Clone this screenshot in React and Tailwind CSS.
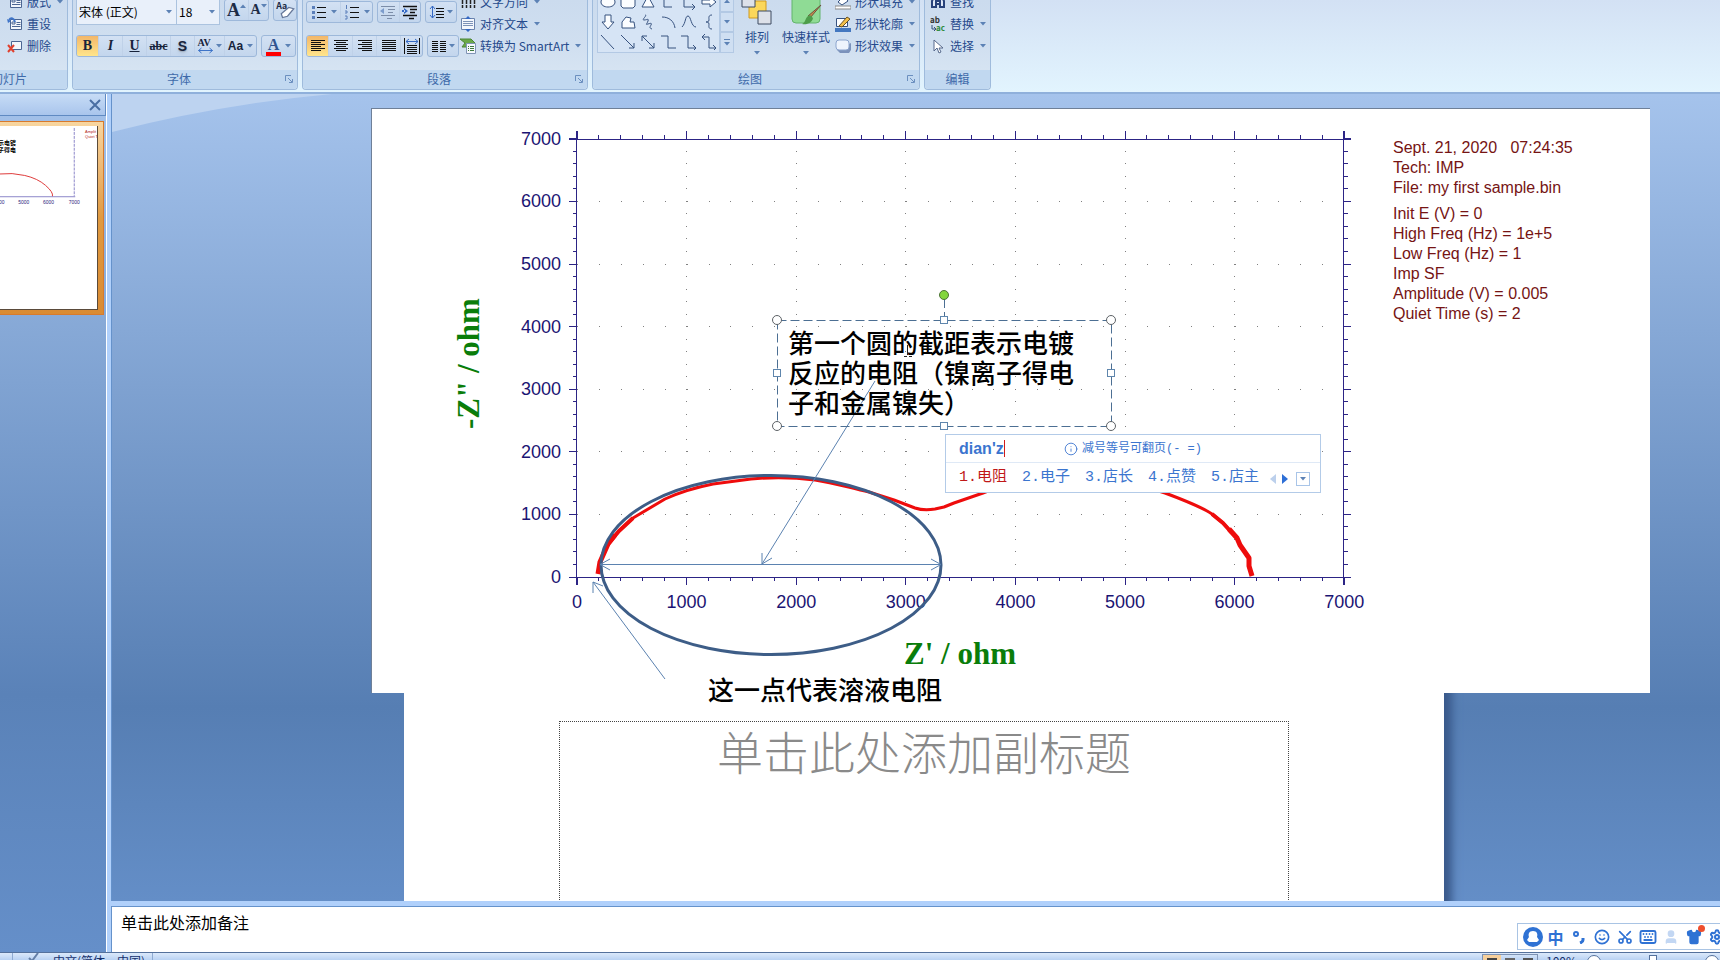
import { useState } from 'react';
import clsx from 'clsx';
import { Info, Keyboard, Scissors, Settings, Shirt, Smile, User } from 'lucide-react';

const X0 = 577;
const Y0 = 576;
const STEP_X = 109.6;
const STEP_Y = 62.6;
const MAJORS = [0, 1, 2, 3, 4, 5, 6, 7];
const MINORS = Array.from({ length: 36 }, (_, i) => i);

const candidates = ['电阻', '电子', '店长', '点赞', '店主'];

const runInfo = ['Sept. 21, 2020   07:24:35', 'Tech: IMP', 'File: my first sample.bin'];

const runParams = [
  'Init E (V) = 0',
  'High Freq (Hz) = 1e+5',
  'Low Freq (Hz) = 1',
  'Imp SF',
  'Amplitude (V) = 0.005',
  'Quiet Time (s) = 2'
];

const box = 'flex h-[22px] rounded-[3px] border border-[#9db8da] bg-linear-to-b from-[#d3e1f3] to-[#c3d6ed]';
const tool = 'flex h-full items-center justify-center gap-1 border-r border-[#bfd1e8] last:border-r-0';
const imeCell = 'flex w-[23px] shrink-0 justify-center';

function Caret({ className }) {
  return (
    <svg viewBox="0 0 6 4" className={clsx('h-1 w-1.5 shrink-0', className)} aria-hidden="true">
      <path d="M0 0h6L3 3.5z" fill="#5c82b5" />
    </svg>
  );
}

function Icon({ children, className = 'h-4 w-4' }) {
  return (
    <svg viewBox="0 0 16 16" className={clsx('shrink-0', className)} fill="none" aria-hidden="true">
      {children}
    </svg>
  );
}

function Group({ label, className, launcher, children }) {
  return (
    <section className={clsx('flex shrink-0 flex-col rounded-b border-x border-b border-[#9fbbdc] bg-linear-to-b from-[#cbdbee] via-[#d0dff0] to-[#dae7f4]', className)}>
      <div className="flex h-[70px] items-end pb-[13px] pl-[3px]">{children}</div>
      <div className="flex h-[19px] items-center rounded-b bg-[#c1d8f0] pb-0.5">
        <h2 className="flex-1 text-center text-xs text-[#3e6aaa]">{label}</h2>
        {launcher && (
          <button type="button" aria-label={label + '设置'} className="mr-1">
            <svg viewBox="0 0 8 8" className="h-2 w-2" fill="none" stroke="#6b8fbf">
              <path d="M.5 6V.5H6M3 3l4 4M7.5 4v3.5H4" />
            </svg>
          </button>
        )}
      </div>
    </section>
  );
}

function Item({ icon, label, caret }) {
  return (
    <button type="button" className="flex h-[22px] items-center gap-0.5 text-xs whitespace-nowrap text-[#264a8c]">
      {icon}
      <span className="px-0.5">{label}</span>
      {caret && <Caret className="ml-0.5" />}
    </button>
  );
}

function Select({ label, value, className }) {
  return (
    <label className={clsx('relative flex h-[26px] items-center border border-[#abc3df] bg-[#e9f0fa]', className)}>
      <select aria-label={label} defaultValue={value} className="w-full appearance-none pl-0.5 text-xs text-black outline-none">
        <option>{value}</option>
      </select>
      <Caret className="absolute right-1" />
    </label>
  );
}

function Lines({ rows }) {
  return (
    <Icon>
      {rows.map(([from, to], i) => (
        <path key={i} d={`M${from} ${2.5 + i * 2}H${to}`} stroke="#111" />
      ))}
    </Icon>
  );
}

const slideIcon = <path d="M3.5 3.5h11v10h-11zM5 6h3v2H5zM9.500 6.500h4M9.500 8.500h4M5 10.500h8.500" stroke="#4c6693" fill="#f3f7fd" />;

function SlidesGroup() {
  return (
    <Group label="幻灯片" className="-ml-[50px] w-[118px]">
      <div className="ml-[53px] flex flex-col items-start">
        <Item label="版式" caret icon={<Icon>{slideIcon}</Icon>} />
        <Item
          label="重设"
          icon={
            <Icon>
              {slideIcon}
              <path d="M8 6C7 2 4 1 2 4" stroke="#3e74c8" strokeWidth="2" />
              <path d="M0 3l1 4 3-2z" fill="#3e74c8" />
            </Icon>
          }
        />
        <Item
          label="删除"
          icon={
            <Icon>
              <path d="M4.500 3.500h10v8h-10z" fill="#f3f7fd" stroke="#4c6693" />
              <path d="M1 7l6 7M7 7l-6 7" stroke="#e0402e" strokeWidth="2" />
            </Icon>
          }
        />
      </div>
    </Group>
  );
}

function FontGroup() {
  const [bold, setBold] = useState(true);
  return (
    <Group label="字体" launcher className="w-[226px]">
      <div className="flex flex-col gap-2.5">
        <div className="flex">
          <Select label="字体" value="宋体 (正文)" className="w-[101px]" />
          <Select label="字号" value="18" className="w-[43px] border-l-0" />
          <div className={clsx(box, 'ml-1 w-[45px] font-["Liberation_Serif",serif] font-bold text-[#1d2b45]')}>
            <button type="button" aria-label="增大字号" className={clsx(tool, 'w-6 text-lg leading-none')}>
              A
              <Caret className="-ml-1 mb-2 rotate-180" />
            </button>
            <button type="button" aria-label="减小字号" className={clsx(tool, 'flex-1 text-sm leading-none')}>
              A
              <Caret className="-ml-1 mb-2" />
            </button>
          </div>
          <button type="button" aria-label="清除格式" className={clsx(box, 'ml-1 w-6 items-center justify-center')}>
            <Icon className="h-5 w-5">
              <text x="1" y="7" fontSize="7" fontWeight="700" fill="#1d2b45">Aa</text>
              <path d="M5 11l6-5 4 1-5 6-4 1z" fill="#fff" stroke="#66789a" />
            </Icon>
          </button>
        </div>
        <div className="flex gap-1">
          <div className={clsx(box, 'w-[181px] overflow-hidden font-["Liberation_Serif",serif] text-sm text-[#17233b]')}>
            <button
              type="button"
              aria-label="加粗"
              onClick={() => setBold((prev) => !prev)}
              className={clsx(tool, 'w-[22px] font-bold', bold && 'bg-linear-to-b from-[#f3b76a] to-[#ffe58b]')}
            >
              B
            </button>
            <button type="button" aria-label="倾斜" className={clsx(tool, 'w-6 font-bold italic')}>I</button>
            <button type="button" aria-label="下划线" className={clsx(tool, 'w-6 font-bold underline')}>U</button>
            <button type="button" aria-label="删除线" className={clsx(tool, 'w-6 text-xs font-bold line-through')}>abc</button>
            <button type="button" aria-label="阴影" className={clsx(tool, 'w-6 font-["Liberation_Sans",sans-serif] font-bold text-shadow-md')}>S</button>
            <button type="button" aria-label="字符间距" className={clsx(tool, 'w-[30px] text-xs')}>
              <Icon className="h-4 w-[17px]">
                <text x="0" y="8" fontSize="10" fontWeight="700" fill="#17233b">AV</text>
                <path d="M1 12.500h14M4 10l-3 2.500L4 15M12 10l3 2.500-3 2.500" stroke="#3e74c8" />
              </Icon>
              <Caret className="-ml-0.5" />
            </button>
            <button type="button" aria-label="更改大小写" className={clsx(tool, 'flex-1 font-["Liberation_Sans",sans-serif] text-xs font-bold')}>
              Aa
              <Caret />
            </button>
          </div>
          <button type="button" aria-label="字体颜色" className={clsx(box, 'w-[35px] items-center justify-center gap-1')}>
            <span className="border-b-4 border-[#f00] px-0.5 font-['Liberation_Serif',serif] text-base leading-[15px] font-bold text-[#31548f]">A</span>
            <Caret />
          </button>
        </div>
      </div>
    </Group>
  );
}

function ParagraphGroup() {
  return (
    <Group label="段落" launcher className="w-[286px]">
      <div className="flex w-[154px] flex-col gap-3">
        <div className="flex gap-1">
          <div className={clsx(box, 'w-[67px]')}>
            <button type="button" aria-label="项目符号" className={clsx(tool, 'w-[34px]')}>
              <Icon>
                <path d="M6 3.500h9M6 8.500h9M6 13.500h9" stroke="#111" />
                <path d="M1 2h3v3H1zM1 7h3v3H1zM1 12h3v3H1z" fill="#5b7fba" />
              </Icon>
              <Caret />
            </button>
            <button type="button" aria-label="编号" className={clsx(tool, 'flex-1')}>
              <Icon>
                <path d="M6 3.500h9M6 8.500h9M6 13.500h9" stroke="#111" />
                <path d="M2.500 1v4M1 7h2v2H1M1 12h2v3H1" stroke="#5b7fba" />
              </Icon>
              <Caret />
            </button>
          </div>
          <div className={clsx(box, 'w-[44px]')}>
            <button type="button" aria-label="减少缩进" className={clsx(tool, 'flex-1')}>
              <Icon>
                <path d="M1 2.500h14M8 5.500h7M8 8.500h5M1 11.500h14M7 14.500h5" stroke="#7c8da8" />
                <path d="M0 7l4-3v6z" fill="#7c9ccc" />
              </Icon>
            </button>
            <button type="button" aria-label="增加缩进" className={clsx(tool, 'flex-1')}>
              <Icon>
                <path d="M1 2.500h14M8 5.500h7M8 8.500h5M1 11.500h14M7 14.500h5" stroke="#111" strokeWidth="1.500" />
                <path d="M6 7L2 4v6zM0 6h3v2H0z" fill="#3569c4" />
              </Icon>
            </button>
          </div>
          <button type="button" aria-label="行距" className={clsx(box, 'w-8 items-center justify-center gap-0.5')}>
            <Icon>
              <path d="M7 4.500h8M7 7.500h8M7 10.500h8M7 13.500h8" stroke="#111" />
              <path d="M3.500 2v12M1 5l2.500-3L6 5M1 11l2.500 3L6 11" stroke="#3569c4" />
            </Icon>
            <Caret />
          </button>
        </div>
        <div className="flex gap-1">
          <div className={clsx(box, 'w-[117px] overflow-hidden')}>
            <button type="button" aria-label="左对齐" className={clsx(tool, 'w-[22px] bg-linear-to-b from-[#f3b76a] to-[#ffe58b]')}>
              <Lines rows={[[1, 15], [1, 11], [1, 15], [1, 11], [1, 15], [1, 11]]} />
            </button>
            <button type="button" aria-label="居中" className={clsx(tool, 'w-6')}>
              <Lines rows={[[1, 15], [3, 13], [1, 15], [3, 13], [1, 15], [3, 13]]} />
            </button>
            <button type="button" aria-label="右对齐" className={clsx(tool, 'w-6')}>
              <Lines rows={[[1, 15], [5, 15], [1, 15], [5, 15], [1, 15], [5, 15]]} />
            </button>
            <button type="button" aria-label="两端对齐" className={clsx(tool, 'w-6')}>
              <Lines rows={[[1, 15], [1, 15], [1, 15], [1, 15], [1, 15], [1, 15]]} />
            </button>
            <button type="button" aria-label="分散对齐" className={clsx(tool, 'flex-1')}>
              <Icon>
                <path d="M.5 0v16M15.500 0v16M3 7.500h10M3 9.500h10M3 11.500h10M3 13.500h10M3 15.500h10" stroke="#111" />
                <path d="M2 3.500h12M5 1L2 3.500 5 6M11 1l3 2.500L11 6" stroke="#3569c4" />
              </Icon>
            </button>
          </div>
          <button type="button" aria-label="分栏" className={clsx(box, 'w-8 items-center justify-center gap-0.5')}>
            <Icon>
              <path d="M1 3.500h6M1 5.500h6M1 7.500h6M1 9.500h6M1 11.500h6M1 13.500h6M9 3.500h6M9 5.500h6M9 7.500h6M9 9.500h6M9 11.500h6M9 13.500h6" stroke="#111" />
            </Icon>
            <Caret />
          </button>
        </div>
      </div>
      <div className="flex flex-col items-start">
        <Item label="文字方向" caret icon={<Icon><path d="M2.500 1v13M6.500 1v13M10.500 1v13M14.500 1v13" stroke="#222" strokeDasharray="9 1" strokeWidth="1.500" /></Icon>} />
        <Item
          label="对齐文本"
          caret
          icon={
            <Icon>
              <path d="M1.500 2.500h13v11h-13z" fill="#f3f7fd" stroke="#6a83ad" />
              <path d="M3 5.500h10M3 7.500h10M3 9.500h10" stroke="#7d93b8" />
              <path d="M8 0l3 3H5zM8 16l3-3H5z" fill="#3569c4" />
            </Icon>
          }
        />
        <Item
          label="转换为 SmartArt"
          caret
          icon={
            <Icon>
              <path d="M0 1h11l4 4-4 4H2l3-4z" fill="#6aa84a" stroke="#4d8637" />
              <path d="M6.500 5.500h9v10h-9z" fill="#f7f9fd" stroke="#8094b5" />
              <path d="M8 8.500h1M10 8.500h4M8 10.500h1M10 10.500h4M8 12.500h1M10 12.500h4" stroke="#3c7a3c" />
            </Icon>
          }
        />
      </div>
    </Group>
  );
}

const shapes = [
  { d: 'M8 3c4 0 7 2 7 5s-3 5-7 5-7-2-7-5 3-5 7-5z', solid: true },
  { d: 'M3 2h10l2 2v8l-2 2H3l-2-2V4z', solid: true },
  { d: 'M8 2l6 11H2z', solid: true },
  { d: 'M3 1v12h8' },
  { d: 'M3 1v12h10M11 10l3 3-3 3' },
  { d: 'M1 6h8V3l6 5-6 5v-3H1z', solid: true },
  { d: 'M5 1h6v7h3l-6 7-6-7h3z', solid: true },
  { d: 'M2 14V8l4-5 5 1-1 4h4l1 6z', solid: true },
  { d: 'M5 1c3 0-4 5-1 5s5-2 4 1-3 4 0 3 4-1 3 1-2 3 1 4' },
  { d: 'M1 3c7 0 12 4 13 11' },
  { d: 'M1 13C5 9 4 2 7 2s3 11 8 11' },
  { d: 'M11 1c-4 0-3 3-3 5s-2 2-3 2c1 0 3 0 3 2s-1 5 3 5' },
  { d: 'M1 1l13 14' },
  { d: 'M1 1l13 13M14 9v5H9' },
  { d: 'M2 2l12 12M14 9v5H9M2 7V2h5' },
  { d: 'M0 2h7v12h8' },
  { d: 'M0 2h7v12h8M12 11l3 3-3 3' },
  { d: 'M1 3h7v11h7M12 11l3 3-3 3M4 0L1 3l3 3' }
];

function DrawingGroup() {
  return (
    <Group label="绘图" launcher className="w-[328px]">
      <div className="mb-1 ml-px flex w-[137px] shrink-0">
        <div className="grid flex-1 grid-cols-6 border border-[#b3c9e4] bg-[#d6e4f5]">
          {shapes.map((shape) => (
            <button key={shape.d} type="button" aria-label="形状" className="flex h-5 items-center justify-center">
              <Icon>
                <path d={shape.d} stroke="#37527f" fill={shape.solid ? '#fbfdff' : 'none'} />
              </Icon>
            </button>
          ))}
        </div>
        <div className="flex w-3.5 flex-col">
          {['rotate-180', '', ''].map((turn, i) => (
            <button key={i} type="button" aria-label="滚动形状" className="flex flex-1 flex-col items-center justify-center gap-0.5 border border-[#b3c9e4] bg-[#cfdff2]">
              {i === 2 && <span className="w-1.5 border-t border-[#5c82b5]" />}
              <Caret className={turn} />
            </button>
          ))}
        </div>
      </div>
      <button type="button" className="ml-2 flex w-[30px] flex-col items-center text-xs whitespace-nowrap text-[#264a8c]">
        <svg viewBox="0 0 32 32" className="h-8 w-8" aria-hidden="true">
          <path d="M8 8h17v17H8z" fill="#fbd75b" stroke="#d19a1e" />
          <path d="M1 1h13v13H1zM17 18h13v13H17z" fill="#dde1e9" stroke="#3d4a60" />
        </svg>
        <span className="leading-6">排列</span>
        <Caret className="my-0.5" />
      </button>
      <button type="button" className="ml-2 flex w-[52px] flex-col items-center text-xs whitespace-nowrap text-[#264a8c]">
        <svg viewBox="0 0 32 32" className="h-8 w-8" aria-hidden="true">
          <rect x="2" y="-3" width="28" height="33" rx="4" fill="#8fdb95" stroke="#63b46d" />
          <path d="M31 12L20 25l-2-2z" fill="#c98a4b" stroke="#6d5340" />
          <path d="M20 22l3 3c-1 5-6 7-11 6 4-1 3-8 8-9z" fill="#4d9d4b" />
        </svg>
        <span className="leading-6">快速样式</span>
        <Caret className="my-0.5" />
      </button>
      <div className="ml-[3px] flex flex-col items-start">
        <Item label="形状填充" caret icon={<Icon><path d="M3 8l6-6 4 5-6 4z" fill="#fff" stroke="#37527f" /><path d="M0 12h16v3H0z" fill="#fff" stroke="#888" /></Icon>} />
        <Item
          label="形状轮廓"
          caret
          icon={
            <Icon>
              <path d="M1.500 2.500h11v8h-11z" fill="#fff" stroke="#37527f" />
              <path d="M4 10L12 1l3 2-8 8z" fill="#f3c04b" stroke="#6b5322" />
              <path d="M0 12h16v4H0z" fill="#4478c0" />
            </Icon>
          }
        />
        <Item
          label="形状效果"
          caret
          icon={
            <Icon>
              <path d="M2 12l3 3h9l2-3V5z" fill="#7b92bb" />
              <rect x="1" y="2" width="13" height="10" rx="3" fill="#eef4fd" stroke="#8ca5ce" />
            </Icon>
          }
        />
      </div>
    </Group>
  );
}

function EditGroup() {
  return (
    <Group label="编辑" className="w-[67px]">
      <div className="ml-0.5 flex flex-col items-start">
        <Item label="查找" icon={<Icon><path d="M2 13V7l2-4h2v10zM10 13V3h2l2 4v6zM6 7h4v3H6z" fill="#dfe8f7" stroke="#27427a" strokeWidth="2" /></Icon>} />
        <Item
          label="替换"
          caret
          icon={
            <Icon>
              <text x="0" y="7" fontSize="8" fontWeight="700" fill="#333">ab</text>
              <text x="6" y="15" fontSize="8" fontWeight="700" fill="#2d8a3e">ac</text>
              <path d="M2 9v4h3M4 11l2 2-2 2" stroke="#37527f" />
            </Icon>
          }
        />
        <Item label="选择" caret icon={<Icon><path d="M4 2v11l3-3 2 5 2-1-2-4h4z" fill="#fff" stroke="#56698c" /></Icon>} />
      </div>
    </Group>
  );
}

function Plot() {
  return (
    <svg viewBox="372 108 1278 584" className="absolute top-0 left-0 h-[584px] w-[1278px]" fill="none">
      <g stroke="#808080" strokeWidth="1" shapeRendering="crispEdges">
        {MAJORS.slice(1, 7).map((n) => (
          <g key={n}>
            <path d={`M${X0 + n * STEP_X} ${Y0 - 0.5}V138`} strokeDasharray="1 11.52" strokeDashoffset="1" />
            <path d={`M${X0} ${Y0 - n * STEP_Y}H1343`} strokeDasharray="1 20.92" />
          </g>
        ))}
      </g>
      <g stroke="#2c2485" shapeRendering="crispEdges">
        <path d="M576.500 130V584M1343.500 130V584M569 138.500H1351M569 576.500H1351" />
        {MINORS.map((i) => {
          const x = X0 + (i * STEP_X) / 5;
          const y = Y0 - (i * STEP_Y) / 5;
          const long = i % 5 === 0;
          return (
            <path
              key={i}
              d={`M${x} 138v${long ? -8 : -4}M${x} 576v${long ? 8 : 4}M577 ${y}h${long ? -8 : -4}M1343 ${y}h${long ? 8 : 5}`}
            />
          );
        })}
      </g>
      <g fill="#1b1473" fontFamily="'Liberation Sans Narrow', 'Arial Narrow', 'Liberation Sans', sans-serif" fontSize="18">
        {MAJORS.map((n) => (
          <g key={n}>
            <text x="561" y={Y0 + 6 - n * STEP_Y} textAnchor="end">{n * 1000}</text>
            <text x={X0 + n * STEP_X} y="607" textAnchor="middle">{n * 1000}</text>
          </g>
        ))}
      </g>
      <g fill="#0a7d0a" fontFamily="'Liberation Serif', serif" fontSize="31" fontWeight="700">
        <text x="904" y="663">{"Z' / ohm"}</text>
        <text transform="translate(479 428) rotate(-90)">{'-Z" / ohm'}</text>
      </g>
      <g stroke="#ee0c0c" strokeLinejoin="round">
        <path
          d="M600 561L608 543 619 530 633 517 665 498C680 491 698 486 713 483L751 478Q783 475 815 479C835 482 850 487 869 491L894 499 915 507Q924 510 935 508L944 506 954 502 983 492C1030 472 1105 472 1165 492Q1200 505 1212 513L1223 522 1237 537"
          strokeWidth="3"
        />
        <path d="M608 543L619 530 633 517M1212 513L1223 522 1232 532" strokeWidth="4" />
        <path d="M598 573L600 561 608 543 615 534M1229 528L1237 537 1240 544 1249 557 1249 565 1252 575" strokeWidth="5" />
      </g>
      <ellipse cx="771" cy="564" rx="170" ry="89.500" stroke="#3d5d87" strokeWidth="3" />
      <g stroke="#5b82b0">
        <path d="M875 380L762 563M762 552V563L772 557" />
        <path d="M600 563.500H941M610 558l-10 5.500 10 5.500M931 558l10 5.500-10 5.500" />
        <path d="M665 678L593 581M593 592V581L603 585" />
      </g>
    </svg>
  );
}

function SelectionFrame() {
  const xs = [6, 173, 340];
  const ys = [31, 84, 137];
  return (
    <svg viewBox="0 0 346 144" className="absolute top-[180px] left-[399px] h-[144px] w-[346px]" fill="none" aria-hidden="true">
      <path d="M6.500 31.500H340.500V137.500H6.500zM173.500 10V31" stroke="#4c6f93" strokeDasharray="9 4" />
      {xs.map((x) =>
        ys.map((y) => {
          if (x === 173 && y === 84) return null;
          if (x !== 173 && y !== 84) return <circle key={`${x}-${y}`} cx={x} cy={y} r="4.500" fill="#fff" stroke="#5d6266" />;
          return <rect key={`${x}-${y}`} x={x - 3.5} y={y - 3.5} width="7" height="7" fill="#fff" stroke="#5f86ad" />;
        })
      )}
      <circle cx="173" cy="6" r="4.500" fill="#83d63d" stroke="#4d7336" />
      <path d="M136.500 56V66M133 67.500h3M138 67.500h3" stroke="#222" />
    </svg>
  );
}

function ImePopup() {
  return (
    <div className="absolute top-[325px] left-[573px] w-[376px] border border-[#b3cbe8] bg-white font-['Liberation_Mono','Noto_Sans_CJK_SC',monospace] text-[#3b75cf]">
      <div className="flex h-7 items-center border-b border-[#dfe9f6] pl-[13px]">
        <span className="w-[105px] font-['Liberation_Sans',sans-serif] text-base font-bold">
          <span className="border-r border-[#d21c1c]">dian&apos;z</span>
        </span>
        <Info className="h-3.5 w-3.5" strokeWidth={1.5} />
        <span className="ml-1 text-xs">减号等号可翻页(- =)</span>
      </div>
      <div className="flex h-[29px] items-center pt-0.5 pl-[13px]">
        {candidates.map((word, i) => (
          <button key={word} type="button" className={clsx('w-[63px] text-left text-[15px] whitespace-nowrap', i === 0 && 'text-[#c01818]')}>
            {i + 1}.{word}
          </button>
        ))}
        <button type="button" aria-label="上一页" className="-ml-1 w-3">
          <svg viewBox="0 0 6 10" className="h-2.5 w-1.5"><path d="M6 0v10L0 5z" fill="#bcd0ec" /></svg>
        </button>
        <button type="button" aria-label="下一页" className="w-3.5">
          <svg viewBox="0 0 6 10" className="h-2.5 w-1.5"><path d="M0 0v10l6-5z" fill="#2e6fd6" /></svg>
        </button>
        <button type="button" aria-label="更多" className="flex h-3.5 w-3.5 items-center justify-center border border-[#a9c5e8]">
          <Caret />
        </button>
      </div>
    </div>
  );
}

function Thumbnails() {
  return (
    <aside className="flex w-[106px] shrink-0 flex-col bg-linear-to-b from-[#a4c2ea] via-[#5a82b8] via-70% to-[#658fc9]">
      <div className="flex h-[22px] items-center justify-end border-r border-b border-[#5f8ac2] bg-linear-to-b from-[#c7dcf6] to-[#a9c5ec] pr-1">
        <button type="button" aria-label="关闭">
          <svg viewBox="0 0 12 12" className="h-3 w-3" stroke="#4a6fa3" strokeWidth="2"><path d="M1 1l10 10M11 1L1 11" /></svg>
        </button>
      </div>
      <button
        type="button"
        aria-label="幻灯片 1"
        className="mt-[5px] mr-0.5 h-[194px] border-y border-r border-[#d87a2c] bg-linear-to-b from-[#f8d6a0] via-[#e09a40] to-[#d98b33] py-1 pr-[5px]"
      >
        <svg viewBox="0 126 98 185" className="h-full w-full border-r border-b border-[#5a4a3a] bg-white" preserveAspectRatio="none" fill="none">
          <path d="M75 128V197" stroke="#8c86c8" strokeDasharray="3 1" />
          <path d="M0 197.500H76" stroke="#8c86c8" />
          <path d="M0 174.500Q12 173 25 176T46 186T53 197" stroke="#de3a3a" />
          <g fontSize="5" fill="#2a237c" fontFamily="'Liberation Sans', sans-serif" textAnchor="middle">
            <text x="-1" y="205">4000</text>
            <text x="24" y="205">5000</text>
            <text x="49" y="205">6000</text>
            <text x="75" y="205">7000</text>
          </g>
          <g fontSize="6" fontWeight="700" fill="#000" textAnchor="end" fontFamily="'Noto Sans CJK SC', sans-serif">
            <text x="16" y="145">表示电镀</text>
            <text x="16" y="152">离子得电</text>
          </g>
          <g fontSize="4" fill="#b02020" fontFamily="'Liberation Sans', sans-serif">
            <text x="86" y="133">Amplit</text>
            <text x="86" y="138">Quiet T</text>
          </g>
        </svg>
      </button>
    </aside>
  );
}

function Slide() {
  return (
    <main className="relative flex min-h-0 flex-1 justify-center overflow-hidden bg-linear-to-b from-[#a5c3ec] via-[#567eb3] via-76% to-[#648ec7] pt-3.5 pl-4">
      <svg viewBox="0 0 300 38" className="absolute top-0 left-0 h-[38px] w-[300px]" aria-hidden="true">
        <path d="M0 0H220Q110 10 0 38z" fill="#bdd3f0" />
      </svg>
      <div className="relative w-[1040px] shrink-0 bg-white shadow-[8px_40px_8px_#3a5a8c]">
        <div className="absolute top-0 -left-[33px] h-[585px] w-[1279px] border-t border-l border-[#6f8098] bg-white">
          <Plot />
          <div className="absolute top-[29px] left-[1021px] text-base leading-5 whitespace-pre text-[#761414] font-['Liberation_Sans',sans-serif]">
            {runInfo.map((line) => (
              <p key={line}>{line}</p>
            ))}
            <div className="mt-1.5">
              {runParams.map((line) => (
                <p key={line}>{line}</p>
              ))}
            </div>
          </div>
          <p className="absolute top-[218px] left-[416px] text-[26px] leading-[30px] font-medium whitespace-nowrap text-black">
            第一个圆的截距表示电镀
            <br />
            反应的电阻（镍离子得电
            <br />
            子和金属镍失）
          </p>
          <SelectionFrame />
          <p className="absolute top-[565px] left-[336px] text-[26px] leading-[30px] font-medium whitespace-nowrap text-black">这一点代表溶液电阻</p>
          <ImePopup />
        </div>
        <div className="mt-[613px] ml-[155px] h-full w-[730px] border border-dotted border-[#444] pt-0.5 text-center">
          <p className="text-[46px] leading-[52px] font-light text-[#8a8a8a]">单击此处添加副标题</p>
        </div>
      </div>
    </main>
  );
}

function ImeBar() {
  return (
    <div className="absolute right-0 bottom-0.5 flex h-[27px] w-[203px] items-center overflow-hidden border border-r-0 border-[#a9c4e4] bg-white pl-[3px] text-[#2f72d4]">
      <button type="button" aria-label="输入法" className={imeCell}>
        <span className="flex h-5 w-5 items-center justify-center rounded-full bg-[#2f72d4]">
          <svg viewBox="0 0 14 14" className="h-3.5 w-3.5" fill="#fff"><path d="M7 1c4 0 5 3 4 6l2 3-2 2H3l-2-2 2-3C2 4 3 1 7 1z" /></svg>
        </span>
      </button>
      <button type="button" className={clsx(imeCell, 'text-base leading-4 font-bold')}>中</button>
      <button type="button" aria-label="标点" className={imeCell}>
        <svg viewBox="0 0 14 14" className="h-3.5 w-3.5" fill="none" stroke="currentColor" strokeWidth="2"><circle cx="4" cy="4" r="2" /><path d="M11 8v2q0 2-3 3" strokeWidth="3" /></svg>
      </button>
      <button type="button" aria-label="表情" className={imeCell}><Smile className="h-4 w-4" strokeWidth={2.5} /></button>
      <button type="button" aria-label="截图" className={imeCell}><Scissors className="h-4 w-4 -rotate-90" strokeWidth={2.5} /></button>
      <button type="button" aria-label="键盘" className={imeCell}><Keyboard className="h-[18px] w-[18px]" strokeWidth={2.5} /></button>
      <button type="button" aria-label="账户" className={imeCell}>
        <User className="h-4 w-4 text-[#c3d7f3]" fill="currentColor" />
      </button>
      <button type="button" aria-label="皮肤" className={clsx(imeCell, 'relative')}>
        <Shirt className="h-4 w-4" fill="currentColor" />
        <span className="absolute -top-1 right-0 h-[7px] w-[7px] rounded-full bg-[#ee4f2e]" />
      </button>
      <button type="button" aria-label="设置" className={imeCell}><Settings className="h-4 w-4" strokeWidth={3} /></button>
    </div>
  );
}

export default function App() {
  return (
    <div className="flex h-screen flex-col overflow-hidden bg-[#b0d0fb] font-['Noto_Sans_CJK_SC',sans-serif]">
      <header className="flex h-[94px] shrink-0 items-start gap-1 overflow-hidden border-b-2 border-[#8fb0db] bg-linear-to-b from-[#d3e1f4] to-[#e2f4fe]">
        <SlidesGroup />
        <FontGroup />
        <ParagraphGroup />
        <DrawingGroup />
        <EditGroup />
      </header>

      <div className="flex min-h-0 flex-1">
        <Thumbnails />
        <div className="flex min-w-0 flex-1 flex-col border-l border-white pl-1">
          <div className="flex min-h-0 flex-1 border-l border-[#6592cb]">
            <Slide />
          </div>
          <div className="relative mt-[5px] h-[46px] shrink-0 border-t border-l border-[#6592cb] bg-white">
            <textarea aria-label="备注" defaultValue="单击此处添加备注" className="block h-full w-full resize-none px-[9px] pt-[3px] text-base leading-6 text-black outline-none" />
            <ImeBar />
          </div>
        </div>
      </div>

      <footer className="flex h-2 shrink-0 items-start overflow-hidden border-t border-[#54719c] bg-linear-to-b from-[#dbe9fb] to-[#b9d2f3] text-xs leading-4 text-[#15306b]">
        <div className="ml-3 flex h-4 items-start border-l border-[#8fabd2] pl-3">
          <svg viewBox="0 0 16 8" className="h-2 w-4" stroke="#6580a8" strokeWidth="2" fill="none"><path d="M4 5l3 3 6-8" /></svg>
        </div>
        <span className="ml-3 w-[100px] shrink-0 border-r border-[#8fabd2]">中文(简体，中国)</span>
        <div className="ml-auto flex w-[238px] shrink-0 items-start">
          <div className="mt-px flex border border-[#7d92b3]">
            <button type="button" aria-label="普通视图" className="h-4 w-[18px] bg-[#f6cf9b] px-1 pt-0.5"><span className="block h-3 border-2 border-[#444]" /></button>
            <button type="button" aria-label="幻灯片浏览" className="h-4 w-[18px] px-1 pt-0.5"><span className="block h-3 border-2 border-[#666]" /></button>
            <button type="button" aria-label="放映" className="h-4 w-[18px] px-1 pt-0.5"><span className="block h-3 bg-[#555]" /></button>
          </div>
          <span className="ml-2">100%</span>
          <button type="button" aria-label="缩小" className="mt-0.5 ml-2.5 h-3.5 w-3.5 rounded-full border border-[#54719c] bg-white" />
          <span className="mt-0.5 ml-12 h-3 w-2 border border-[#54719c] bg-white" />
          <button type="button" aria-label="放大" className="mt-0.5 ml-12 h-3.5 w-3.5 rounded-full border border-[#54719c] bg-white" />
        </div>
      </footer>
    </div>
  );
}
